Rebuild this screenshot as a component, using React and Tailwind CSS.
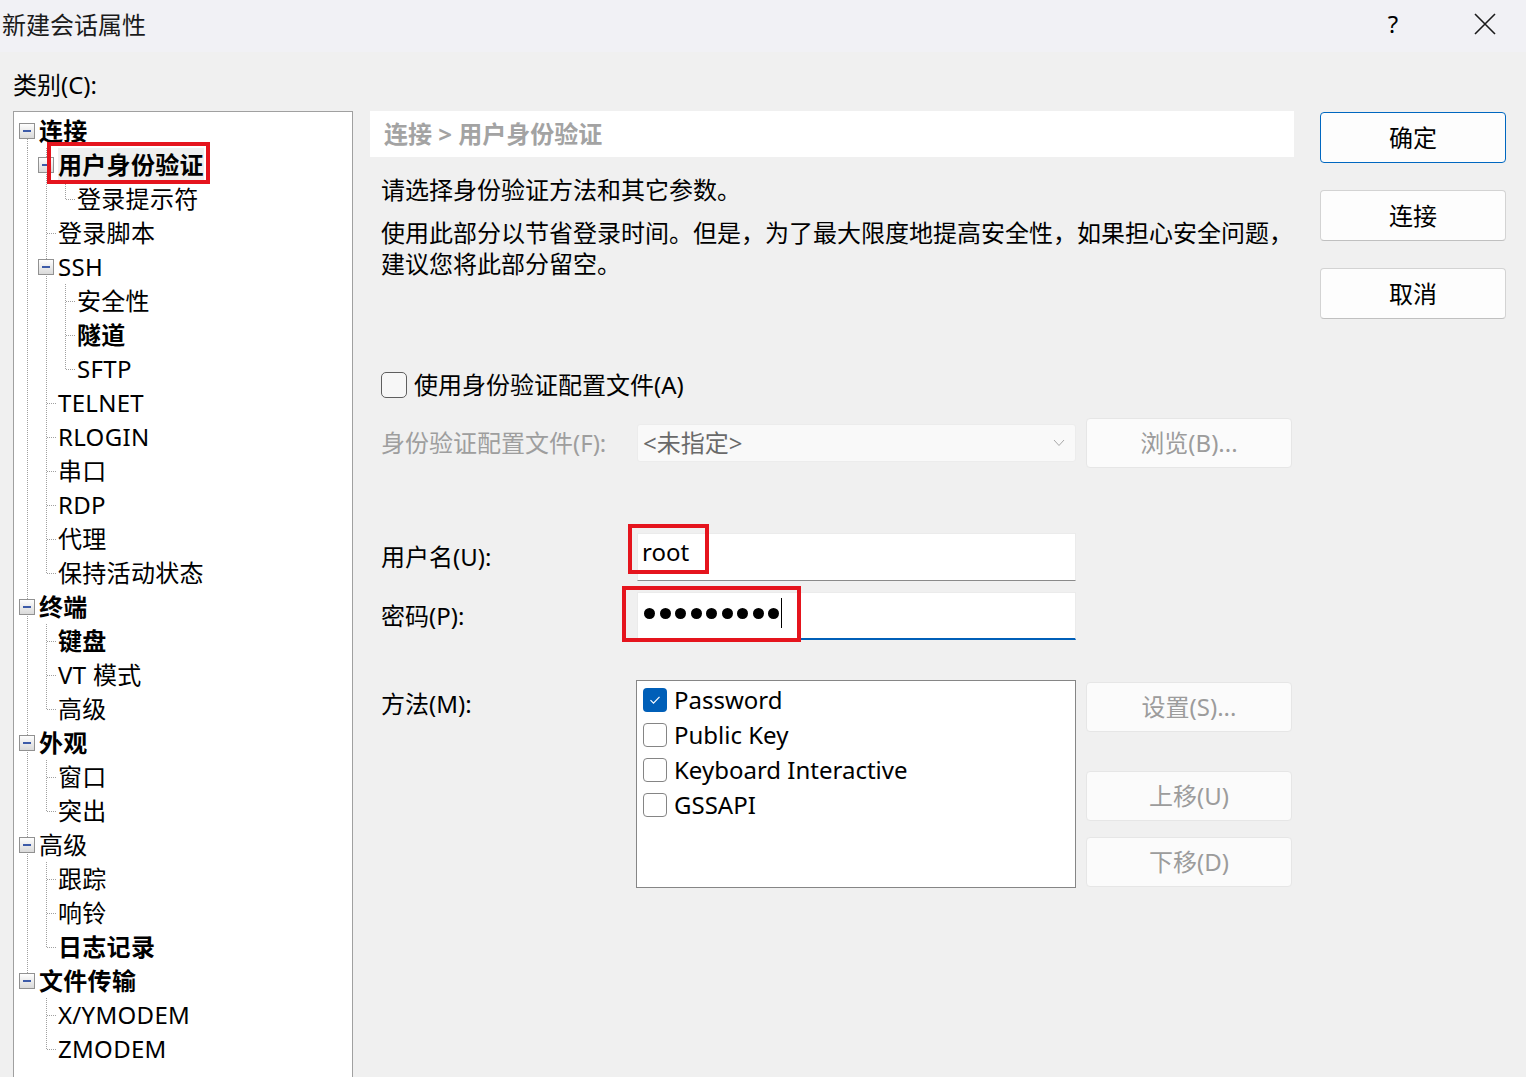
import React from "react";

const tree = [
  { t: "连接", pre: [], own: "exp-down", bold: true },
  { t: "用户身份验证", pre: ["v"], own: "exp-full", bold: true, mark: true },
  { t: "登录提示符", pre: ["v", "v"], own: "end" },
  { t: "登录脚本", pre: ["v"], own: "tee" },
  { t: "SSH", pre: ["v"], own: "exp-full" },
  { t: "安全性", pre: ["v", "v"], own: "tee" },
  { t: "隧道", pre: ["v", "v"], own: "tee", bold: true },
  { t: "SFTP", pre: ["v", "v"], own: "end" },
  { t: "TELNET", pre: ["v"], own: "tee" },
  { t: "RLOGIN", pre: ["v"], own: "tee" },
  { t: "串口", pre: ["v"], own: "tee" },
  { t: "RDP", pre: ["v"], own: "tee" },
  { t: "代理", pre: ["v"], own: "tee" },
  { t: "保持活动状态", pre: ["v"], own: "end" },
  { t: "终端", pre: [], own: "exp-full", bold: true },
  { t: "键盘", pre: ["v"], own: "tee", bold: true },
  { t: "VT 模式", pre: ["v"], own: "tee" },
  { t: "高级", pre: ["v"], own: "end" },
  { t: "外观", pre: [], own: "exp-full", bold: true },
  { t: "窗口", pre: ["v"], own: "tee" },
  { t: "突出", pre: ["v"], own: "end" },
  { t: "高级", pre: [], own: "exp-full" },
  { t: "跟踪", pre: ["v"], own: "tee" },
  { t: "响铃", pre: ["v"], own: "tee" },
  { t: "日志记录", pre: ["v"], own: "end", bold: true },
  { t: "文件传输", pre: [], own: "exp-up", bold: true },
  { t: "X/YMODEM", pre: ["n"], own: "tee" },
  { t: "ZMODEM", pre: ["n"], own: "end" },
];

const dot = { stroke: "#a0a0a0", strokeWidth: 1, strokeDasharray: "1 1", shapeRendering: "crispEdges" };

// one 19px column of the tree guide lines
const Cell = ({ type }) => (
  <svg width="19" height="34" className="shrink-0">
    {(type === "v" || type === "tee" || type === "exp-full") && <line x1="9.5" y1="0" x2="9.5" y2="34" style={dot} />}
    {type === "end" && <line x1="9.5" y1="0" x2="9.5" y2="17" style={dot} />}
    {type === "exp-down" && <line x1="9.5" y1="17" x2="9.5" y2="34" style={dot} />}
    {type === "exp-up" && <line x1="9.5" y1="0" x2="9.5" y2="17" style={dot} />}
    {(type === "tee" || type === "end") && <line x1="10" y1="17.5" x2="19" y2="17.5" style={dot} />}
    {type.startsWith("exp") && (
      <g>
        <defs>
          <linearGradient id="expg" x1="0" y1="0" x2="0" y2="1">
            <stop offset="0" stopColor="#ffffff" />
            <stop offset="1" stopColor="#d8d8d8" />
          </linearGradient>
        </defs>
        <rect x="1.5" y="9.5" width="15" height="15" fill="url(#expg)" stroke="#919191" />
        <rect x="5" y="16" width="8" height="2" fill="#3d5ba8" />
      </g>
    )}
  </svg>
);

const Check = ({ on }) =>
  on ? (
    <div className="flex h-[24px] w-[24px] items-center justify-center rounded-[4px] bg-[#005fb8]">
      <svg width="12" height="10" viewBox="0 0 12 10">
        <path d="M1.5 5.2 L4.5 8.2 L10.5 1.8" fill="none" stroke="#fff" strokeWidth="1.2" />
      </svg>
    </div>
  ) : (
    <div className="h-[24px] w-[24px] rounded-[4px] border border-[#858585] bg-white"></div>
  );

const SideBtn = ({ children, cls }) => (
  <div className={"flex h-[50px] items-center justify-center rounded-[4px] border border-[#e6e6e6] bg-[#fbfbfb] text-[24px] text-[#9c9c9c] " + cls}>
    {children}
  </div>
);

export default function App() {
  return (
    <div className="h-[1077px] w-[1526px] overflow-hidden bg-[#f0f0f0] font-['Noto_Sans','Noto_Sans_CJK_SC',sans-serif] text-black">
      {/* title bar */}
      <div className="flex h-[52px] items-center bg-[#f1f1f5]">
        <div className="pl-[2px] pb-[2px] text-[24px] text-[#1b1b1b]">新建会话属性</div>
        <div className="ml-auto mr-[18px] flex items-center gap-[46px]">
          <div className="flex w-[46px] justify-center pb-[4px] text-[24px]">?</div>
          <div className="flex w-[46px] justify-center pb-[4px]">
            <svg width="22" height="22" viewBox="0 0 22 22">
              <path d="M1 1 L21 21 M21 1 L1 21" stroke="#1b1b1b" strokeWidth="1.6" />
            </svg>
          </div>
        </div>
      </div>

      <div className="flex px-[13px]">
        {/* category tree */}
        <div className="w-[340px] shrink-0">
          <div className="mt-[18px] mb-[11px] h-[30px] text-[24px] leading-[30px]">类别(C):</div>
          <div className="h-[980px] border border-[#a0a0a0] bg-white pt-[2px] pl-[4px]">
            {tree.map((r, i) => (
              <div key={i} className="flex h-[34px] items-center">
                {r.pre.map((p, j) => (
                  <Cell key={j} type={p} />
                ))}
                <Cell type={r.own} />
                <span
                  className={
                    "relative ml-[2px] text-[24px] leading-[34px] whitespace-nowrap tracking-[0.3px] " +
                    (r.bold ? "font-bold " : "") +
                    (r.mark ? "bg-[#efefef]" : "")
                  }
                >
                  {r.t}
                  {r.mark && <span className="absolute -top-[6px] -bottom-[2px] -left-[11px] -right-[6px] border-[4px] border-[#e5141d]"></span>}
                </span>
              </div>
            ))}
          </div>
        </div>

        {/* settings page */}
        <div className="ml-[17px] w-[924px] shrink-0 pt-[59px]">
          <div className="flex h-[46px] items-center bg-white pl-[14px] text-[24px] font-bold text-[#a3a3a3]">
            连接 &gt; 用户身份验证
          </div>
          <div className="mt-[17px] pl-[11px] text-[24px] leading-[31px]">请选择身份验证方法和其它参数。</div>
          <div className="mt-[12px] pl-[11px] text-[24px] leading-[31px]">
            使用此部分以节省登录时间。但是，为了最大限度地提高安全性，如果担心安全问题，
            <br />
            建议您将此部分留空。
          </div>

          <div className="mt-[89px] flex h-[34px] items-center pl-[11px]">
            <div className="h-[26px] w-[26px] rounded-[5px] border border-[#5f5f5f] bg-[#f7f7f7]"></div>
            <span className="ml-[7px] text-[24px]">使用身份验证配置文件(A)</span>
          </div>

          <div className="mt-[16px] flex h-[50px] items-center pl-[11px]">
            <div className="w-[256px] text-[24px] text-[#9e9e9e]">身份验证配置文件(F):</div>
            <div className="flex h-[38px] w-[439px] items-center rounded-[3px] border border-[#ececec] bg-[#f9f9f9] pl-[5px] pr-[10px]">
              <span className="text-[24px] text-[#6a6a6a]">&lt;未指定&gt;</span>
              <svg className="ml-auto" width="12" height="8" viewBox="0 0 12 8">
                <path d="M1 1 L6 6.5 L11 1" fill="none" stroke="#a8a8a8" strokeWidth="1" />
              </svg>
            </div>
            <SideBtn cls="ml-[10px] w-[206px]">浏览(B)...</SideBtn>
          </div>

          <div className="mt-[65px] flex h-[48px] items-center pl-[11px]">
            <div className="w-[256px] text-[24px]">用户名(U):</div>
            <div className="flex h-[48px] w-[439px] items-center border border-[#ebebeb] border-b-[#8a8a8a] bg-white pl-[4px] pb-[10px]">
              <span className="relative text-[24px]">
                root
                <span className="absolute -top-[10px] -bottom-[4px] -left-[14px] -right-[20px] border-[4px] border-[#e5141d]"></span>
              </span>
            </div>
          </div>

          <div className="mt-[11px] flex h-[48px] items-center pl-[11px]">
            <div className="w-[256px] text-[24px]">密码(P):</div>
            <div className="flex h-[48px] w-[439px] items-center border border-[#ebebeb] border-b-2 border-b-[#005fb8] bg-white pl-[6px] pb-[5px]">
              <div className="relative flex h-[30px] items-center gap-[4.5px]">
                {Array.from({ length: 9 }).map((_, i) => (
                  <span key={i} className="h-[11px] w-[11px] rounded-full bg-black"></span>
                ))}
                <span className="ml-[-2.5px] h-[30px] w-[1px] bg-black"></span>
                <span className="absolute -top-[12px] -bottom-[14px] -left-[22px] -right-[19px] border-[4px] border-[#e5141d]"></span>
              </div>
            </div>
          </div>

          <div className="mt-[40px] flex pl-[11px]">
            <div className="w-[255px] pt-[9px] text-[24px] leading-[30px]">方法(M):</div>
            <div className="h-[208px] w-[440px] border border-[#868686] bg-white pt-[1px] pl-[6px]">
              {[
                ["Password", true],
                ["Public Key", false],
                ["Keyboard Interactive", false],
                ["GSSAPI", false],
              ].map(([label, on]) => (
                <div key={label} className="flex h-[35px] items-center gap-[7px]">
                  <Check on={on} />
                  <span className="text-[24px]">{label}</span>
                </div>
              ))}
            </div>
            <div className="ml-[10px] flex w-[206px] flex-col pt-[2px]">
              <SideBtn cls="">设置(S)...</SideBtn>
              <SideBtn cls="mt-[39px]">上移(U)</SideBtn>
              <SideBtn cls="mt-[16px]">下移(D)</SideBtn>
            </div>
          </div>
        </div>

        {/* dialog buttons */}
        <div className="ml-[26px] flex w-[186px] shrink-0 flex-col gap-[27px] pt-[60px]">
          <div className="flex h-[51px] items-center justify-center rounded-[4px] border border-[#0067c0] bg-[#fdfdfd] text-[24px]">确定</div>
          <div className="flex h-[51px] items-center justify-center rounded-[4px] border border-[#d3d3d3] border-b-[#c0c0c0] bg-[#fdfdfd] text-[24px]">连接</div>
          <div className="flex h-[51px] items-center justify-center rounded-[4px] border border-[#d3d3d3] border-b-[#c0c0c0] bg-[#fdfdfd] text-[24px]">取消</div>
        </div>
      </div>
    </div>
  );
}
